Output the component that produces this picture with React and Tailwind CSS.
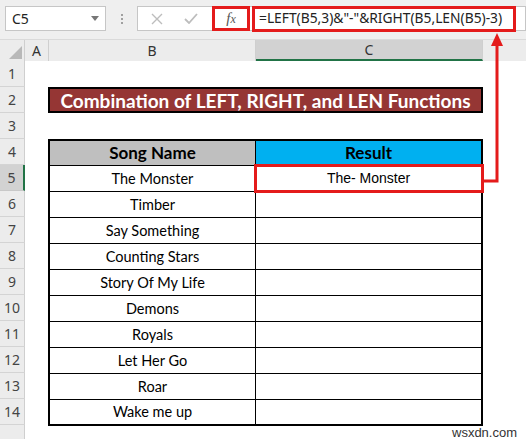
import React from 'react';

const songs = [
  'The Monster',
  'Timber',
  'Say Something',
  'Counting Stars',
  'Story Of My Life',
  'Demons',
  'Royals',
  'Let Her Go',
  'Roar',
  'Wake me up',
];

const ui = "font-['Noto_Sans',sans-serif]";

export default function App() {
  const rows = Array.from({ length: 15 }, (_, i) => i + 1);

  return (
    <div className="w-[526px] h-[439px] bg-white overflow-hidden relative font-['Lato',sans-serif]">
      {/* Formula bar */}
      <div className="h-[39px] bg-[#efefef] flex items-start pt-[6px] pl-[5px]">
        <div className="w-[101px] h-[25px] bg-white border border-[#c6c6c6] flex items-center justify-between pl-[6px] pr-[6px]">
          <span className={`${ui} text-[14px] text-[#222]`}>C5</span>
          <svg width="8" height="5" viewBox="0 0 8 5">
            <path d="M0 0 L8 0 L4 5 Z" fill="#777" />
          </svg>
        </div>
        <div className="w-[31px] h-[25px] flex flex-col items-center justify-center gap-[2px]">
          <span className="w-[2px] h-[2px] bg-[#a0a0a0]" />
          <span className="w-[2px] h-[2px] bg-[#a0a0a0]" />
          <span className="w-[2px] h-[2px] bg-[#a0a0a0]" />
        </div>
        <div className="flex-1 h-[25px] bg-white border border-[#c6c6c6] flex items-center">
          <div className="w-[38px] flex justify-center">
            <svg width="12" height="12" viewBox="0 0 12 12">
              <path d="M1 1 L11 11 M11 1 L1 11" stroke="#bdbdbd" strokeWidth="1.4" />
            </svg>
          </div>
          <div className="w-[30px] flex justify-center">
            <svg width="14" height="11" viewBox="0 0 14 11">
              <path d="M1 6 L5 10 L13 1" stroke="#bdbdbd" strokeWidth="1.8" fill="none" />
            </svg>
          </div>
          <div className="ml-[6px] w-[38px] h-[25px] border-[3px] border-[#e41b1b] flex items-center justify-center">
            <span className="font-['Liberation_Serif',serif] italic text-[15px] text-[#555]">
              f<span className="text-[12px]">x</span>
            </span>
          </div>
          <div className="ml-[2px] w-[264px] h-[26px] border-[3px] border-[#e41b1b] flex items-center pl-[4px]">
            <span className={`${ui} text-[13.8px] text-[#222] whitespace-nowrap`}>
              =LEFT(B5,3)&amp;"-"&amp;RIGHT(B5,LEN(B5)-3)
            </span>
          </div>
        </div>
      </div>

      {/* Column headers */}
      <div className={`${ui} h-[22px] flex bg-[#ececec] text-[14px] text-[#333] border-t border-[#dadada]`}>
        <div className="w-[25px] border-r border-[#cfcfcf] flex items-end justify-end p-[2px]">
          <svg width="13" height="13" viewBox="0 0 13 13">
            <path d="M13 0 L13 13 L0 13 Z" fill="#b8b8b8" />
          </svg>
        </div>
        <div className="w-[24px] border-r border-[#cfcfcf] flex items-center justify-center">A</div>
        <div className="w-[207px] border-r border-[#cfcfcf] flex items-center justify-center">B</div>
        <div className="w-[227px] bg-[#d2d2d2] border-r border-[#cfcfcf] border-b-2 border-b-[#217346] flex items-center justify-center">C</div>
        <div className="flex-1" />
      </div>

      {/* Sheet */}
      <div className="flex">
        <div className={`${ui} w-[25px] flex flex-col text-[14px] text-[#444]`}>
          {rows.map((n) => (
            <div
              key={n}
              className={
                n === 5
                  ? 'h-[26px] bg-[#d2d2d2] border-b border-[#c8c8c8] border-r-2 border-r-[#217346] flex items-center justify-center'
                  : 'h-[26px] bg-[#ececec] border-b border-[#d4d4d4] border-r border-r-[#cfcfcf] flex items-center justify-center'
              }
            >
              {n < 15 ? n : ''}
            </div>
          ))}
        </div>

        <div className="flex-1 flex flex-col pl-[23px]">
          <div className="h-[26px]" />
          <div className="w-[435px] h-[26px] bg-[#953634] border-2 border-black flex items-center justify-center">
            <span className="text-white font-bold text-[19px] leading-none">
              Combination of LEFT, RIGHT, and LEN Functions
            </span>
          </div>
          <div className="h-[26px]" />

          {/* Table */}
          <div className="w-[435px] border-2 border-black text-black">
            <div className="h-[25px] flex border-b border-black">
              <div className="w-[206px] bg-[#bfbfbf] border-r border-black flex items-center justify-center font-bold text-[17px]">
                Song Name
              </div>
              <div className="flex-1 bg-[#00b0f0] flex items-center justify-center font-bold text-[17px]">
                Result
              </div>
            </div>
            {songs.map((s, i) => (
              <div
                key={s}
                className={
                  i === songs.length - 1
                    ? 'h-[24px] flex'
                    : 'h-[26px] flex border-b border-black'
                }
              >
                <div className="w-[206px] border-r border-black flex items-center justify-center text-[14.5px]">
                  {s}
                </div>
                <div className="flex-1 flex items-center justify-center font-['Liberation_Sans',sans-serif] text-[14px]">
                  {i === 0 ? 'The- Monster' : ''}
                </div>
              </div>
            ))}
          </div>
        </div>
      </div>

      {/* Highlight on C5 */}
      <div className="absolute left-[254px] top-[164px] w-[230px] h-[29px] border-[3px] border-[#e41b1b]" />

      {/* Arrow */}
      <svg className="absolute left-0 top-0" width="526" height="439">
        <path d="M482 181 L497 181 L497 44" stroke="#e41b1b" strokeWidth="3" fill="none" />
        <path d="M497 33 L491 46 L503 46 Z" fill="#e41b1b" />
      </svg>

      <div className="absolute left-[452px] top-[426px] leading-none font-['Liberation_Sans',sans-serif] text-[13px] text-[#333]">
        wsxdn.com
      </div>
    </div>
  );
}
